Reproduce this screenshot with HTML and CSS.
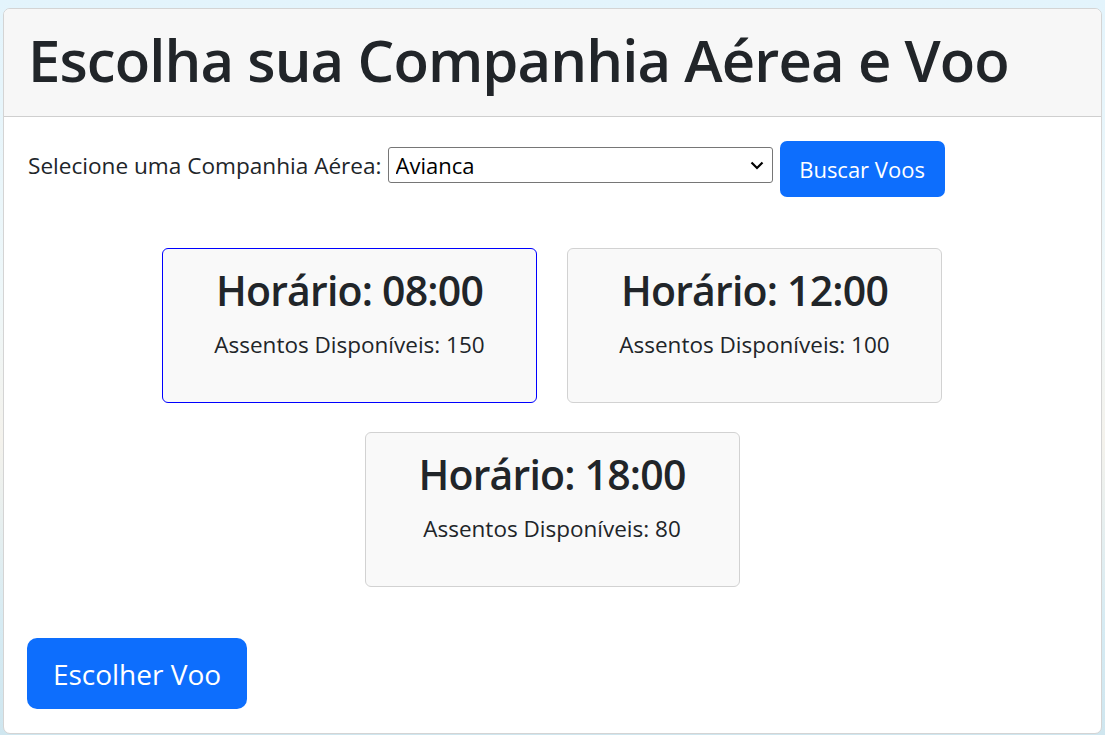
FILE: index.html
```html
<!DOCTYPE html>
<html lang="pt-BR">
<head>
<meta charset="utf-8">
<title>Escolha sua Companhia Aérea e Voo</title>
<link rel="stylesheet" href="styles.css">
</head>
<body>
<div class="page">
  <div class="card">
    <div class="card-header">
      <h1 class="title">Escolha sua Companhia Aérea e Voo</h1>
    </div>
    <div class="card-body">
      <form class="search">
        <label class="search-label" for="airline">Selecione uma Companhia Aérea:</label>
        <select class="search-select" id="airline">
          <option>Avianca</option>
          <option>LATAM</option>
          <option>GOL</option>
          <option>Azul</option>
        </select>
        <button type="button" class="btn btn-search">Buscar Voos</button>
      </form>
      <div class="flights">
        <div class="flight selected">
          <h3 class="flight-time">Horário: 08:00</h3>
          <p class="flight-seats">Assentos Disponíveis: 150</p>
        </div>
        <div class="flight">
          <h3 class="flight-time">Horário: 12:00</h3>
          <p class="flight-seats">Assentos Disponíveis: 100</p>
        </div>
        <div class="flight">
          <h3 class="flight-time">Horário: 18:00</h3>
          <p class="flight-seats">Assentos Disponíveis: 80</p>
        </div>
      </div>
      <button type="button" class="btn btn-choose">Escolher Voo</button>
    </div>
  </div>
</div>
</body>
</html>
```

FILE: styles.css
```css
* {
  box-sizing: border-box;
}

html, body {
  height: 100%;
}

body {
  margin: 0;
  font-family: "Open Sans", "Noto Sans", sans-serif;
  color: #212529;
  background: linear-gradient(180deg, #e3f4fc 0%, #eef7f9 40%, #f4f2ec 60%, #d6ebf3 85%, #cfe6ef 100%);
}

.page {
  padding: 8px 3px 1px 3px;
  height: 100%;
}

.card {
  display: flex;
  flex-direction: column;
  height: 100%;
  background: #fff;
  border: 1px solid #d4d4d4;
  border-radius: 7px;
  overflow: hidden;
}

.card-header {
  background: #f7f7f7;
  border-bottom: 1px solid #cfcfcf;
  padding: 17px 24px 23px 24px;
}

.title {
  margin: 0;
  font-size: 58px;
  line-height: 67px;
  font-weight: 600;
  letter-spacing: -0.9px;
  color: #212529;
}

.card-body {
  padding: 24px 24px 24px 23px;
}

.search {
  display: flex;
  align-items: flex-start;
}

.search-label {
  margin-top: 10px;
  padding-left: 1px;
  font-size: 22.6px;
  line-height: 30px;
}

.search-select {
  appearance: none;
  -webkit-appearance: none;
  margin: 6px 0 0 6px;
  width: 385px;
  height: 36px;
  padding: 0 30px 0 7px;
  font-family: "Open Sans", "Noto Sans", sans-serif;
  font-size: 22px;
  color: #000;
  background: #fff url("data:image/svg+xml;utf8,<svg xmlns='http://www.w3.org/2000/svg' width='14' height='9' viewBox='0 0 14 9'><path d='M1.5 1.5 7 7l5.5-5.5' fill='none' stroke='%23000' stroke-width='2.2'/></svg>") no-repeat right 8px center;
  border: 1px solid #767676;
  border-radius: 3px;
}

.btn {
  border: none;
  background: #0d6efd;
  color: #fff;
  font-family: "Open Sans", "Noto Sans", sans-serif;
  cursor: pointer;
}

.btn-search {
  margin-left: 7px;
  height: 56px;
  width: 165px;
  font-size: 22px;
  border-radius: 7px;
}

.flights {
  display: flex;
  flex-wrap: wrap;
  justify-content: center;
  gap: 29px 30px;
  margin-top: 51px;
}

.flight {
  width: 375px;
  height: 155px;
  padding: 17px 10px 0 10px;
  text-align: center;
  background: #f9f9f9;
  border: 1px solid #d2d2d2;
  border-radius: 6px;
}

.flight.selected {
  border-color: #0000ff;
}

.flight-time {
  margin: 0 0 14px 0;
  font-size: 41px;
  line-height: 48px;
  font-weight: 600;
  letter-spacing: -0.8px;
}

.flight-seats {
  margin: 0;
  font-size: 22.5px;
  line-height: 33px;
}

.btn-choose {
  margin-top: 51px;
  height: 71px;
  width: 220px;
  font-size: 28px;
  border-radius: 10px;
}
```
